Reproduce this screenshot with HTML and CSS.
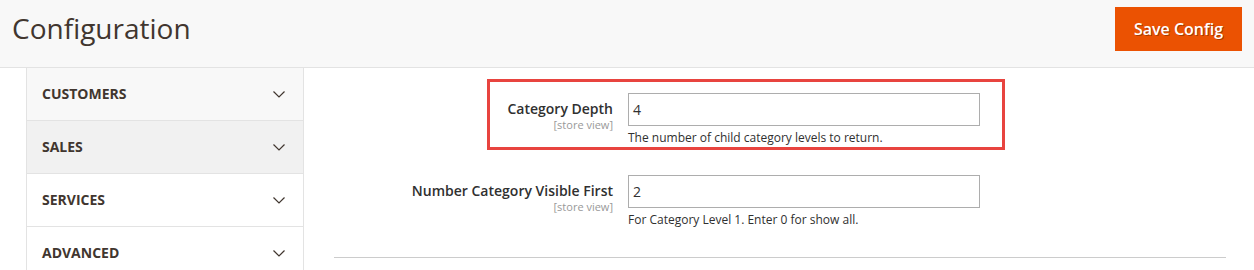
FILE: index.html
```html
<!DOCTYPE html>
<html>
<head>
<meta charset="utf-8">
<link rel="stylesheet" href="styles.css">
</head>
<body>
<header class="page-header">
  <h1 class="page-title">Configuration</h1>
  <button class="btn-primary">Save Config</button>
</header>
<div class="page-main">
  <nav class="side-nav">
    <div class="nav-item nav-item-light"><span>CUSTOMERS</span><svg class="chev" width="12" height="7" viewBox="0 0 12 7"><polyline points="0.5,0.5 6,6 11.5,0.5" fill="none" stroke="#41362f" stroke-width="1.2"/></svg></div>
    <div class="nav-item nav-item-grey"><span>SALES</span><svg class="chev" width="12" height="7" viewBox="0 0 12 7"><polyline points="0.5,0.5 6,6 11.5,0.5" fill="none" stroke="#41362f" stroke-width="1.2"/></svg></div>
    <div class="nav-item"><span>SERVICES</span><svg class="chev" width="12" height="7" viewBox="0 0 12 7"><polyline points="0.5,0.5 6,6 11.5,0.5" fill="none" stroke="#41362f" stroke-width="1.2"/></svg></div>
    <div class="nav-item"><span>ADVANCED</span><svg class="chev" width="12" height="7" viewBox="0 0 12 7"><polyline points="0.5,0.5 6,6 11.5,0.5" fill="none" stroke="#41362f" stroke-width="1.2"/></svg></div>
  </nav>
  <section class="content">
    <div class="field-row">
      <div class="highlight"></div>
      <div class="label-col">
        <div class="label">Category Depth</div>
        <div class="scope">[store view]</div>
      </div>
      <div class="control-col">
        <div class="input">4</div>
        <div class="note">The number of child category levels to return.</div>
      </div>
    </div>
    <div class="field-row">
      <div class="label-col">
        <div class="label">Number Category Visible First</div>
        <div class="scope">[store view]</div>
      </div>
      <div class="control-col">
        <div class="input">2</div>
        <div class="note">For Category Level 1. Enter 0 for show all.</div>
      </div>
    </div>
    <div class="divider"></div>
  </section>
</div>
</body>
</html>
```
FILE: styles.css
```css
* { box-sizing: border-box; }
html, body { margin: 0; padding: 0; background: #fff; }
body { font-family: "Open Sans", "Noto Sans", sans-serif; color: #303030; width: 1254px; height: 270px; overflow: hidden; }

.page-header {
  height: 68px;
  background: #f8f8f8;
  border-bottom: 1px solid #e3e3e3;
  display: flex;
  align-items: flex-start;
  justify-content: space-between;
  padding: 0 12px 0 12px;
}
.page-title {
  margin: 0;
  padding-top: 10px;
  font-size: 28px;
  font-weight: 400;
  line-height: 37px;
  color: #41362f;
}
.btn-primary {
  margin-top: 7px;
  height: 44px;
  width: 127px;
  padding: 0;
  border: none;
  background: #eb5202;
  color: #fff;
  font-family: "Open Sans", "Noto Sans", sans-serif;
  font-size: 16px;
  font-weight: 600;
  text-shadow: 1px 1px 0 rgba(0,0,0,0.3);
}

.page-main { display: flex; }
.side-nav {
  margin-left: 26px;
  width: 278px;
  border-left: 1px solid #e3e3e3;
  border-right: 1px solid #e3e3e3;
  height: 202px;
}
.nav-item {
  height: 53px;
  border-bottom: 1px solid #e3e3e3;
  display: flex;
  align-items: center;
  justify-content: space-between;
  padding: 0 18px 1px 15px;
  font-size: 14px;
  font-weight: 700;
  color: #41362f;
}
.nav-item-light { background: #f8f8f8; }
.nav-item-grey { background: #f1f1f1; }
.chev { display: block; margin-top: 2px; }

.content {
  flex: 1;
  padding: 25px 28px 0 30px;
}
.field-row {
  position: relative;
  display: flex;
  gap: 15px;
  margin-bottom: 29px;
}
.highlight {
  position: absolute;
  left: 153px;
  top: -14px;
  width: 518px;
  height: 71px;
  border: 3px solid #e8443f;
  pointer-events: none;
}
.label-col {
  width: 279px;
  text-align: right;
  padding-top: 6px;
}
.label {
  font-size: 14px;
  font-weight: 600;
  line-height: 19px;
  color: #303030;
}
.scope {
  font-size: 11px;
  line-height: 14px;
  color: #999;
}
.control-col { width: 352px; }
.input {
  height: 33px;
  border: 1px solid #adadad;
  padding: 0 4px;
  font-size: 14px;
  line-height: 31px;
  color: #303030;
  background: #fff;
}
.note {
  margin-top: 4px;
  font-size: 12px;
  line-height: 16px;
  color: #303030;
}
.divider {
  margin-top: 6px;
  height: 1px;
  background: #cccccc;
}
```
